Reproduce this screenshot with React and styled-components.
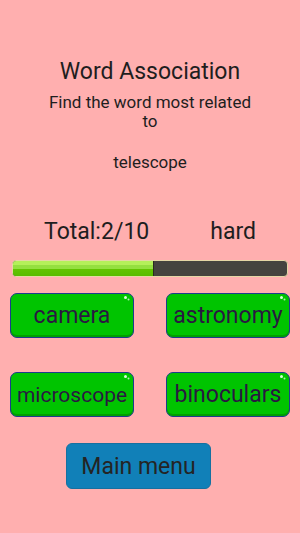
import React from "react";
import styled, { createGlobalStyle } from "styled-components";

const GlobalStyle = createGlobalStyle`
  html, body {
    margin: 0;
    padding: 0;
    background: #ffafaf;
  }
  body {
    font-family: Roboto, "Noto Sans", sans-serif;
    color: #1e1e1e;
  }
`;

const Screen = styled.div`
  width: 300px;
  height: 533px;
  box-sizing: border-box;
  padding-top: 59px;
  display: flex;
  flex-direction: column;
  align-items: center;
  background: #ffafaf;
`;

const Title = styled.h1`
  margin: 0;
  font-size: 23px;
  line-height: 26px;
  font-weight: 400;
`;

const Prompt = styled.p`
  margin: 8px 0 0;
  width: 214px;
  text-align: center;
  font-size: 17px;
  line-height: 19px;
`;

const Word = styled.p`
  margin: 22px 0 0;
  font-size: 17px;
  line-height: 19px;
`;

const ScoreRow = styled.div`
  margin-top: 47px;
  display: flex;
  gap: 61px;
  font-size: 23px;
  line-height: 26px;
`;

const Bar = styled.div`
  margin-top: 15px;
  width: 276px;
  height: 17px;
  box-sizing: border-box;
  border: 1.5px solid #e6d6a6;
  border-radius: 4px;
  background: #45433f;
  overflow: hidden;
  display: flex;
`;

const Fill = styled.div`
  height: 100%;
  border-right: 1px solid #2a2a20;
  background: linear-gradient(
    to bottom,
    #b4f05a 0%,
    #b4f05a 30%,
    #94e040 30%,
    #94e040 55%,
    #62c400 55%,
    #58bc00 100%
  );
`;

const Choices = styled.div`
  margin-top: 16px;
  width: 280px;
  display: grid;
  grid-template-columns: 124px 124px;
  column-gap: 32px;
  row-gap: 34px;
`;

const ChoiceButton = styled.button`
  position: relative;
  height: 45px;
  padding: 0;
  border: 1px solid #1c3c8c;
  border-radius: 7px;
  background: #00c400;
  box-shadow: inset 0 -2px 0 #00a000;
  font-family: Roboto, "Noto Sans", sans-serif;
  font-size: ${(p) => p.$size}px;
  color: #2a1840;
  cursor: pointer;
  &::after {
    content: "";
    position: absolute;
    top: 2px;
    right: 6px;
    width: 3px;
    height: 3px;
    border-radius: 50%;
    background: #d8ffd8;
    box-shadow: 3px 2px 0 -0.5px #b0f0b0;
  }
`;

const MenuButton = styled.button`
  margin: 26px 0 0 -23px;
  width: 145px;
  height: 46px;
  border: 1px solid #1670a0;
  border-radius: 6px;
  background: #1180b8;
  font-family: Roboto, "Noto Sans", sans-serif;
  font-size: 23px;
  color: #242424;
  cursor: pointer;
`;

const choices = [
  { word: "camera", size: 23 },
  { word: "astronomy", size: 23 },
  { word: "microscope", size: 21 },
  { word: "binoculars", size: 23 },
];

export default function App() {
  const done = 2;
  const total = 10;
  const progress = 0.51;
  return (
    <>
      <GlobalStyle />
      <Screen>
        <Title>Word Association</Title>
        <Prompt>Find the word most related to</Prompt>
        <Word>telescope</Word>
        <ScoreRow>
          <span>
            Total:{done}/{total}
          </span>
          <span>hard</span>
        </ScoreRow>
        <Bar>
          <Fill style={{ width: `${progress * 100}%` }} />
        </Bar>
        <Choices>
          {choices.map((c) => (
            <ChoiceButton key={c.word} $size={c.size}>
              {c.word}
            </ChoiceButton>
          ))}
        </Choices>
        <MenuButton>Main menu</MenuButton>
      </Screen>
    </>
  );
}
